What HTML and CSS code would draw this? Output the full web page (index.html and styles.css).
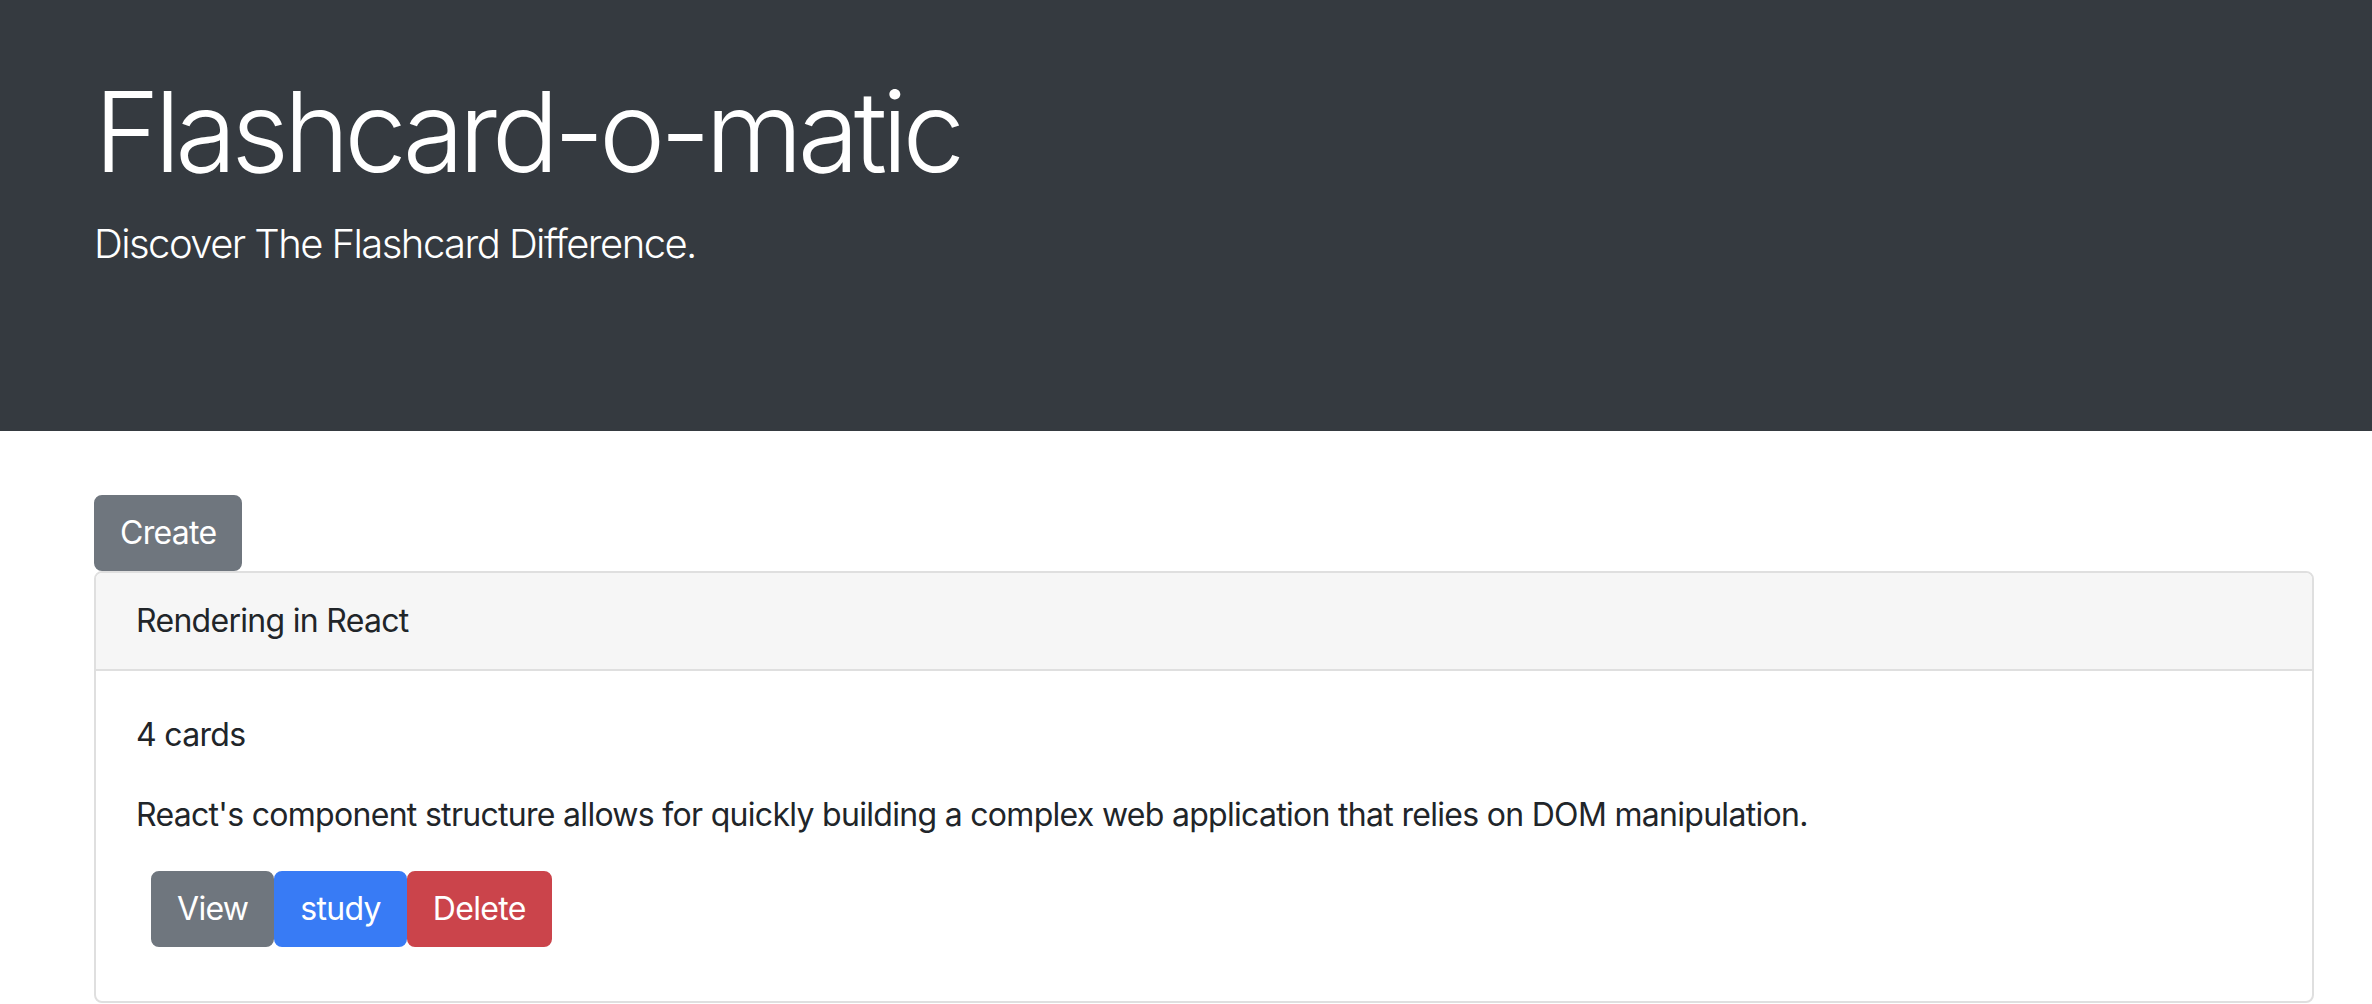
FILE: index.html
```html
<!DOCTYPE html>
<html lang="en">
<head>
<meta charset="utf-8">
<title>Flashcard-o-matic</title>
<link rel="stylesheet" href="styles.css">
</head>
<body>
<header class="hero">
  <h1 class="hero-title">Flashcard-o-matic</h1>
  <p class="hero-lead">Discover The Flashcard Difference.</p>
</header>
<main class="content">
  <button class="btn btn-secondary">Create</button>
  <section class="deck-card">
    <div class="deck-header">Rendering in React</div>
    <div class="deck-body">
      <p class="deck-text">4 cards</p>
      <p class="deck-text">React's component structure allows for quickly building a complex web application that relies on DOM manipulation.</p>
      <div class="deck-actions">
        <button class="btn btn-secondary">View</button>
        <button class="btn btn-primary">study</button>
        <button class="btn btn-danger">Delete</button>
      </div>
    </div>
  </section>
</main>
</body>
</html>
```
FILE: styles.css
```css
* { box-sizing: border-box; }
html, body {
  margin: 0;
  padding: 0;
  background: #ffffff;
  font-family: Inter, "Liberation Sans", sans-serif;
  color: #212529;
}
.hero {
  background: #353a40;
  color: #ffffff;
  height: 431px;
  padding: 64px 64px 0 94px;
}
.hero-title {
  margin: 0 0 16px 0;
  font-size: 112px;
  font-weight: 300;
  line-height: 1.2;
  letter-spacing: -5.4px;
}
.hero-lead {
  margin: 0;
  font-size: 40px;
  font-weight: 300;
  line-height: 1.5;
  letter-spacing: -1.55px;
}
.content {
  margin-top: 64px;
  padding: 0 58px 0 94px;
}
.btn {
  font-family: inherit;
  font-size: 32px;
  line-height: 48px;
  letter-spacing: -0.7px;
  padding: 12px 24px;
  border: 2px solid transparent;
  border-radius: 8px;
  color: #ffffff;
  cursor: pointer;
}
.btn-secondary { background: #6f767e; border-color: #6f767e; }
.btn-primary { background: #387bf5; border-color: #387bf5; }
.btn-danger { background: #cb444b; border-color: #cb444b; }
.content > .btn { display: block; }
.deck-card {
  border: 2px solid #dfdfdf;
  border-radius: 8px;
  overflow: hidden;
}
.deck-header {
  background: #f6f6f6;
  border-bottom: 2px solid #dfdfdf;
  padding: 24px 40px;
  font-size: 32px;
  line-height: 48px;
  letter-spacing: -0.7px;
}
.deck-body {
  padding: 40px 40px 40px 40px;
}
.deck-text {
  margin: 0 0 32px 0;
  font-size: 32px;
  line-height: 48px;
  letter-spacing: -0.7px;
}
.deck-actions {
  display: flex;
  padding-left: 15px;
  margin-bottom: 14px;
}
```
